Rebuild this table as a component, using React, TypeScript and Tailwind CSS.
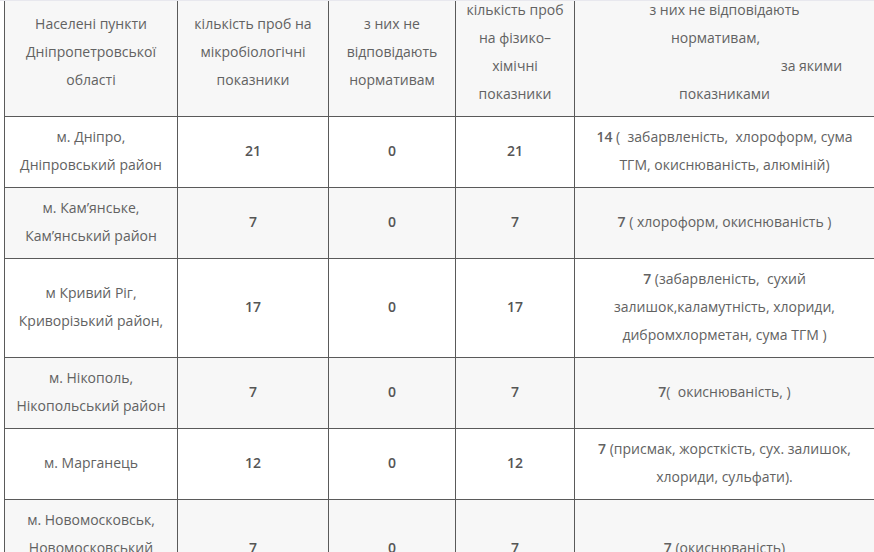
import React from 'react';

type Row = {
  place: React.ReactNode;
  micro: string;
  microBad: string;
  chem: string;
  chemBad: React.ReactNode;
};

const rows: Row[] = [
  {
    place: (
      <>
        м. Дніпро,
        <br />
        Дніпровський район
      </>
    ),
    micro: '21',
    microBad: '0',
    chem: '21',
    chemBad: (
      <>
        <b className="font-semibold">14</b> (&nbsp; забарвленість,&nbsp; хлороформ, сума
        <br />
        ТГМ, окиснюваність, алюміній)
      </>
    ),
  },
  {
    place: (
      <>
        м. Кам’янське,
        <br />
        Кам’янський район
      </>
    ),
    micro: '7',
    microBad: '0',
    chem: '7',
    chemBad: (
      <>
        <b className="font-semibold">7</b> ( хлороформ, окиснюваність )
      </>
    ),
  },
  {
    place: (
      <>
        м Кривий Ріг,
        <br />
        Криворізький район,
      </>
    ),
    micro: '17',
    microBad: '0',
    chem: '17',
    chemBad: (
      <>
        <b className="font-semibold">7</b> (забарвленість,&nbsp; сухий
        <br />
        залишок,каламутність, хлориди,
        <br />
        дибромхлорметан, сума ТГМ )
      </>
    ),
  },
  {
    place: (
      <>
        м. Нікополь,
        <br />
        Нікопольський район
      </>
    ),
    micro: '7',
    microBad: '0',
    chem: '7',
    chemBad: (
      <>
        <b className="font-semibold">7</b>(&nbsp; окиснюваність, )
      </>
    ),
  },
  {
    place: <>м. Марганець</>,
    micro: '12',
    microBad: '0',
    chem: '12',
    chemBad: (
      <>
        <b className="font-semibold">7</b> (присмак, жорсткість, сух. залишок,
        <br />
        хлориди, сульфати).
      </>
    ),
  },
  {
    place: (
      <>
        м. Новомосковськ,
        <br />
        Новомосковський
        <br />
        район
      </>
    ),
    micro: '7',
    microBad: '0',
    chem: '7',
    chemBad: (
      <>
        <b className="font-semibold">7</b> (окиснюваність)
      </>
    ),
  },
];

const cell =
  'border border-[#5a5a5a] px-2 pt-[6px] pb-[8px] text-center align-middle whitespace-nowrap';

export default function App() {
  return (
    <div
      className="bg-white text-[14px] leading-[28px] text-[#626262]"
      style={{ fontFamily: '"Open Sans", "Noto Sans", sans-serif' }}
    >
      <div className="h-px bg-[#e8e8ee]" />
      <div className="overflow-hidden pl-[4px]">
        <table className="-mt-[12px] w-[870px] table-fixed border-collapse">
          <colgroup>
            <col className="w-[173px]" />
            <col className="w-[151px]" />
            <col className="w-[127px]" />
            <col className="w-[119px]" />
            <col className="w-[300px]" />
          </colgroup>
          <thead>
            <tr className="bg-[#f7f7f7]">
              <th className={`${cell} font-normal`}>
                Населені пункти
                <br />
                Дніпропетровської
                <br />
                області
              </th>
              <th className={`${cell} font-normal`}>
                кількість проб на
                <br />
                мікробіологічні
                <br />
                показники
              </th>
              <th className={`${cell} font-normal`}>
                з них не
                <br />
                відповідають
                <br />
                нормативам
              </th>
              <th className={`${cell} font-normal`}>
                кількість проб
                <br />
                на фізико–
                <br />
                хімічні
                <br />
                показники
              </th>
              <th className={`${cell} font-normal`}>
                з них не відповідають
                <br />
                <span className="pr-[18px]">нормативам,</span>
                <br />
                <span className="pl-[174px]">за якими</span>
                <br />
                показниками
              </th>
            </tr>
          </thead>
          <tbody>
            {rows.map((r, i) => (
              <tr key={i} className={i % 2 === 1 ? 'bg-[#f7f7f7]' : 'bg-white'}>
                <td className={cell}>{r.place}</td>
                <td className={`${cell} font-semibold text-[#555]`}>{r.micro}</td>
                <td className={`${cell} font-semibold text-[#555]`}>{r.microBad}</td>
                <td className={`${cell} font-semibold text-[#555]`}>{r.chem}</td>
                <td className={cell}>{r.chemBad}</td>
              </tr>
            ))}
          </tbody>
        </table>
      </div>
    </div>
  );
}
